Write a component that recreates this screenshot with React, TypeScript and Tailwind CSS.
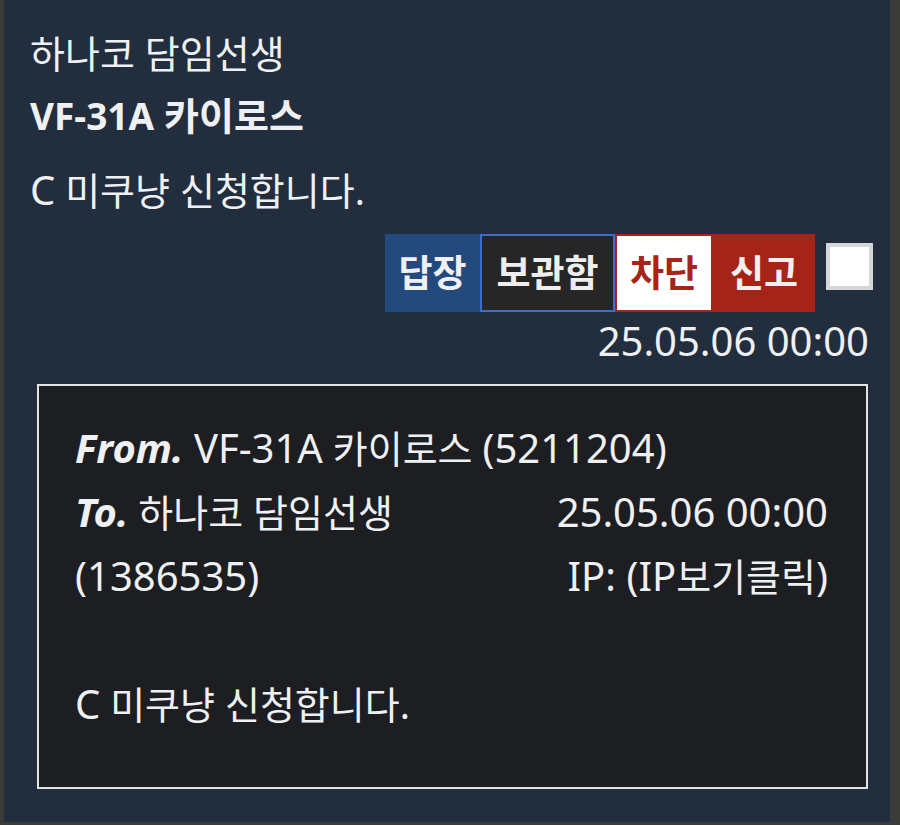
import React from 'react';

// Latin runs are set a bit larger than hangul, as in the reference
function L({ children, bold }: { children: React.ReactNode; bold?: boolean }) {
    return <span className={bold ? 'text-[37px]' : 'text-[40px]'}>{children}</span>;
}

function ActionButtons() {
    return (
        <div className="flex items-start justify-end pr-[17px]">
            <div className="flex h-[78px] items-stretch font-bold text-[37px]">
                <button className="w-[95px] bg-[#24497c] text-[#eef0f3]">답장</button>
                <button className="w-[135px] border-2 border-[#3a6fcf] bg-[#262626] text-[#eeeeee]">보관함</button>
                <button className="w-[98px] border-2 border-[#a82318] bg-white text-[#a82318]">차단</button>
                <button className="w-[102px] bg-[#a62417] text-[#f2eeee]">신고</button>
            </div>
            <div className="ml-[11px] mt-[9px] h-[47px] w-[47px] border-4 border-[#d4d6d8] bg-white" />
        </div>
    );
}

export default function App() {
    return (
        <div className="h-[825px] w-[900px] bg-[#3b3c3a] font-['Noto_Sans','Noto_Sans_CJK_KR',sans-serif] text-[38px] text-[#eef0f2]">
            <div className="ml-[4px] flex h-[822px] w-[886px] flex-col bg-[#222d3d] pt-[22px]">
                <div className="px-[26px]">
                    <div className="leading-[62px]">하나코 담임선생</div>
                    <div className="font-bold leading-[62px]"><L bold>VF-31A</L> 카이로스</div>
                    <div className="mt-[12px] leading-[62px]"><L>C</L> 미쿠냥 신청합니다.</div>
                </div>

                <div className="mt-[13px]">
                    <ActionButtons />
                </div>

                <div className="mt-[7px] pr-[21px] text-right leading-[44px]">
                    <L>25.05.06 00:00</L>
                </div>

                <div className="ml-[33px] mt-[21px] h-[405px] w-[831px] border-2 border-[#e2e4e6] bg-[#1d1e22] pl-[36px] pr-[38px] pt-[30px] leading-[64px]">
                    <div>
                        <L><span className="font-bold italic">From.</span> VF-31A</L> 카이로스 <L>(5211204)</L>
                    </div>
                    <div className="flex justify-between">
                        <div>
                            <div><L><span className="font-bold italic">To.</span></L> 하나코 담임선생</div>
                            <div><L>(1386535)</L></div>
                        </div>
                        <div className="text-right">
                            <div><L>25.05.06 00:00</L></div>
                            <div><L>IP: (IP</L>보기클릭<L>)</L></div>
                        </div>
                    </div>
                    <div className="h-[64px]" />
                    <div><L>C</L> 미쿠냥 신청합니다.</div>
                </div>
            </div>
        </div>
    );
}
